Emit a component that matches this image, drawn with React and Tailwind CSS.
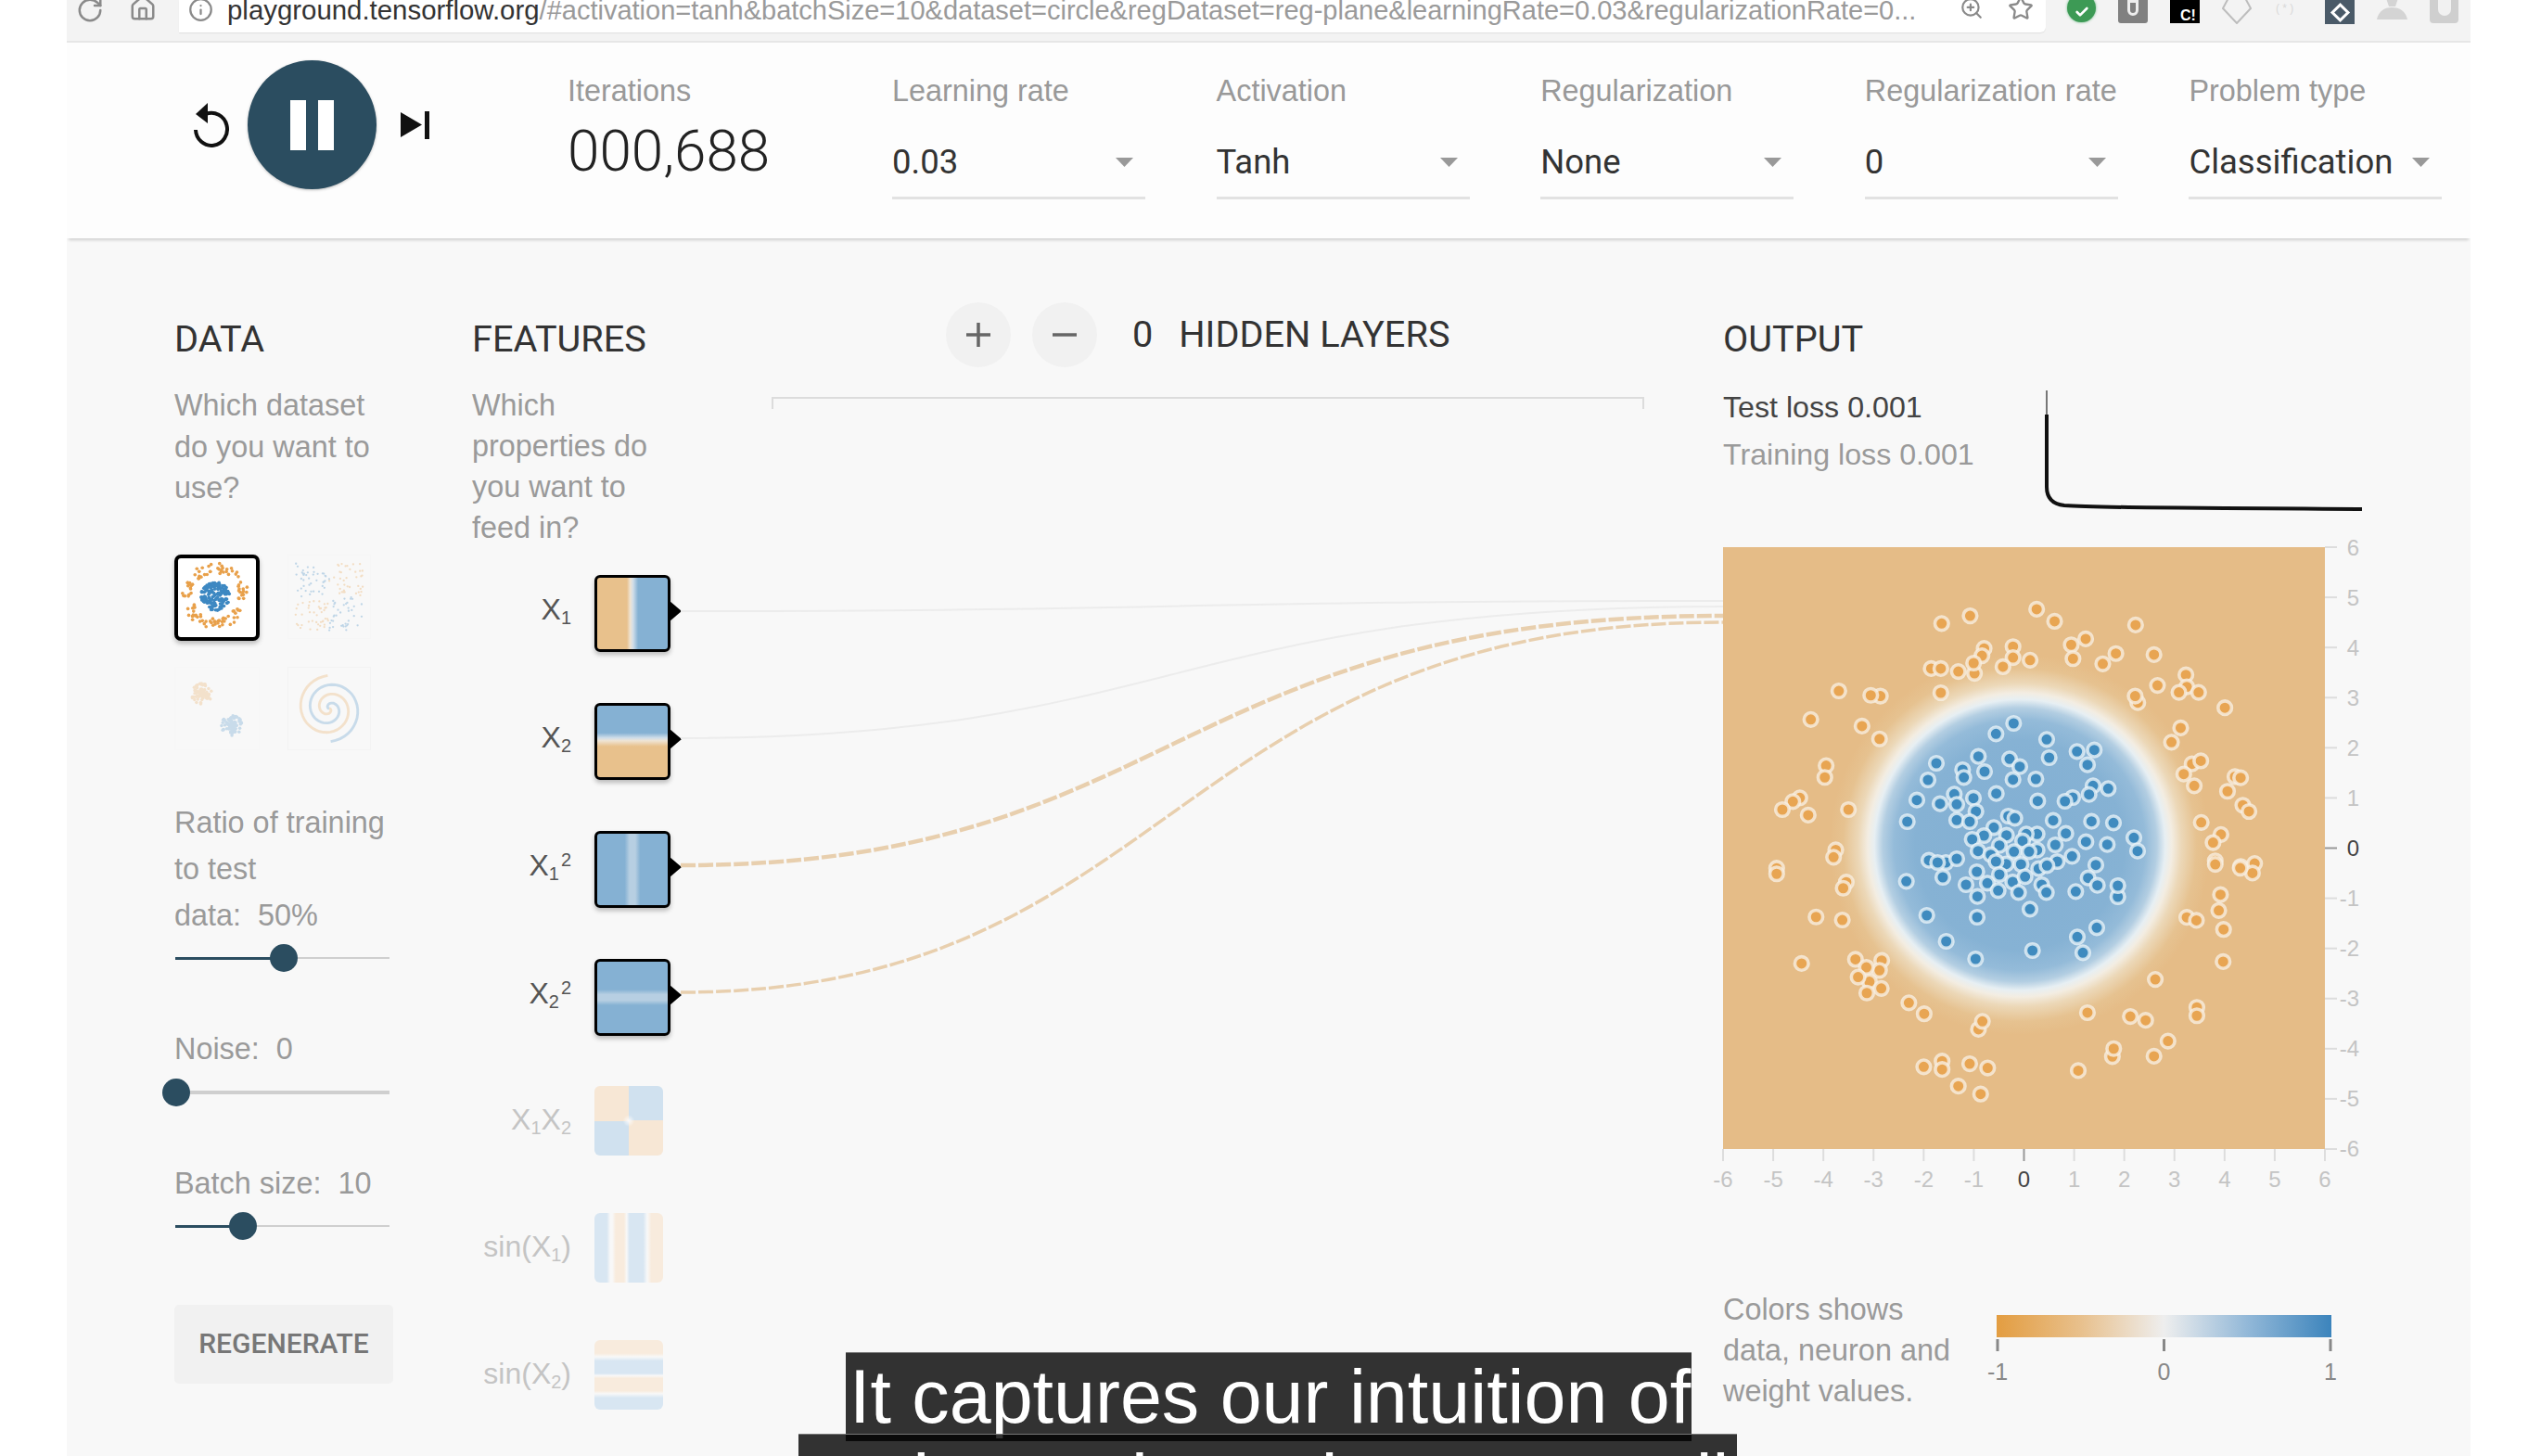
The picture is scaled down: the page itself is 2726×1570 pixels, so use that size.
import { RotateCw, Home, Info, ZoomIn, Star, Check } from 'lucide-react';

const selects = [
  { label: 'Learning rate', value: '0.03' },
  { label: 'Activation', value: 'Tanh' },
  { label: 'Regularization', value: 'None' },
  { label: 'Regularization rate', value: '0' },
  { label: 'Problem type', value: 'Classification' },
];

const features = [
  { key: 'x1', label: <>X<sub className="text-[20px]">1</sub></>, bg: 'bg-[linear-gradient(90deg,#e8c18c_0_42%,#efe4d4_47%,#cfdde9_51%,#85b1d3_58%)]' },
  { key: 'x2', label: <>X<sub className="text-[20px]">2</sub></>, bg: 'bg-[linear-gradient(180deg,#85b1d3_0_38%,#cfdde9_45%,#efe4d4_49%,#e8c18c_57%)]' },
  { key: 'x1s', label: <>X<sub className="text-[20px]">1</sub><sup className="ml-[2px] text-[20px]">2</sup></>, bg: 'bg-[linear-gradient(90deg,#85b1d3_0_39%,#b7cfe2_46%,#b7cfe2_54%,#85b1d3_61%)]' },
  { key: 'x2s', label: <>X<sub className="text-[20px]">2</sub><sup className="ml-[2px] text-[20px]">2</sup></>, bg: 'bg-[linear-gradient(180deg,#85b1d3_0_39%,#b7cfe2_46%,#b7cfe2_54%,#85b1d3_61%)]' },
  { key: 'x1x2', off: true, label: <>X<sub className="text-[20px]">1</sub>X<sub className="text-[20px]">2</sub></>, bg: 'bg-[radial-gradient(circle,#fafafa_0,transparent_12%),conic-gradient(#d0e1ef_0_90deg,#f7e7d5_90deg_180deg,#d0e1ef_180deg_270deg,#f7e7d5_270deg_360deg)]' },
  { key: 'sin1', off: true, label: <>sin(X<sub className="text-[20px]">1</sub>)</>, bg: 'bg-[linear-gradient(90deg,#d8e6f2_0_18%,#f8f8f8_23%,#f8f8f8_26%,#f8ebdd_31%,#f8ebdd_43%,#f8f8f8_47%,#d8e6f2_51%,#d8e6f2_71%,#f8f8f8_77%,#f8ebdd_83%)]' },
  { key: 'sin2', off: true, label: <>sin(X<sub className="text-[20px]">2</sub>)</>, bg: 'bg-[linear-gradient(180deg,#f8ebdd_0_19%,#f8f8f8_24%,#d8e6f2_30%,#d8e6f2_48%,#f8f8f8_51%,#f8ebdd_55%,#f8ebdd_73%,#f8f8f8_77%,#d8e6f2_83%)]' },
];

// dots read off the picture, in crop coordinates
const blueRaw = [[514,120],[457,154],[621,172],[719,211],[775,206],[400,227],[501,235],[629,231],[534,260],[753,254],[264,249],[349,270],[420,276],[237,303],[353,295],[512,302],[586,300],[322,349],[458,347],[384,362],[705,360],[771,322],[758,350],[820,331],[201,368],[276,380],[330,382],[592,371],[680,372],[392,405],[170,438],[330,433],[372,438],[497,420],[518,427],[642,434],[766,437],[837,442],[450,457],[418,483],[590,478],[555,478],[491,482],[543,500],[683,476],[649,513],[748,503],[817,512],[903,490],[915,533],[380,495],[468,515],[399,533],[590,530],[515,535],[564,535],[440,545],[703,550],[655,567],[490,575],[457,567],[538,576],[595,590],[622,580],[780,578],[240,563],[295,570],[268,570],[330,558],[285,618],[395,600],[468,609],[511,633],[551,616],[167,631],[755,620],[785,644],[851,681],[851,645],[360,642],[429,637],[605,642],[620,667],[715,664],[464,661],[530,667],[397,680],[567,721],[233,741],[396,747],[783,781],[720,811],[296,825],[575,855],[391,882],[738,862]];
const orangeTop = [[645,871],[580,892],[797,853],[838,886],[1023,896],[909,934],[876,950],[743,955],[677,960],[672,980],[978,974],[1065,977],[743,985],[782,992],[880,988],[948,1002],[655,1028],[653,1000],[720,1010],[618,1023],[556,1015],[578,1015],[1138,1032],[1073,1061],[1140,1065],[1122,1080],[1167,1080],[345,1076],[440,1090],[418,1088],[578,1081],[1028,1108],[1022,1090],[1227,1122],[281,1154],[398,1172],[438,1207],[1126,1177],[1105,1216],[1152,1275],[1172,1267],[1133,1303],[1157,1335],[1250,1310],[1263,1313],[1233,1350],[316,1280],[313,1312],[256,1368],[240,1378],[216,1400],[275,1415],[367,1400],[1268,1388],[1282,1405],[1173,1435],[1218,1468],[1200,1490],[1205,1540],[1263,1555],[1295,1547],[338,1510],[333,1530],[203,1560]];
const orangeBottom = [[362,52],[355,68],[203,30],[1217,85],[1213,127],[1290,28],[1262,15],[1205,5],[293,144],[353,152],[1140,145],[1162,153],[1224,177],[260,267],[383,256],[443,259],[438,285],[408,277],[415,315],[389,303],[442,333],[409,345],[1223,262],[1068,309],[505,371],[540,400],[913,397],[1011,407],[1046,417],[1163,383],[1163,405],[664,441],[673,420],[1097,472],[970,513],[973,492],[1065,512],[539,540],[581,525],[581,547],[644,532],[685,543],[892,550],[618,591],[669,612]];

const blueDots = blueRaw.map(([x, y]) => [142 + x / 3, 150 + y / 3]);
const orangeDots = [
  ...orangeTop.map(([x, y]) => [-38 + x * 0.472, -270 + y * 0.395]),
  ...orangeBottom.map(([x, y]) => [-38 + x * 0.472, 340 + y * 0.408]),
];

const ticks = [-6, -5, -4, -3, -2, -1, 0, 1, 2, 3, 4, 5, 6];

function rnd(i) {
  const v = Math.sin(i * 12.9898 + 4.1) * 43758.5453;
  return v - Math.floor(v);
}

function Scatter({ points }) {
  return (
    <svg viewBox="0 0 92 92" className="w-full h-full">
      {points.map((p, i) => (
        <circle key={i} cx={p[0]} cy={p[1]} r={p[3] || 2} fill={p[2]} />
      ))}
    </svg>
  );
}

const ORANGE = '#e8a04a';
const BLUE = '#3d88c2';

const circlePts = [];
for (let i = 0; i < 110; i++) {
  const a = rnd(i) * Math.PI * 2;
  const r = 27 + rnd(i + 500) * 12;
  circlePts.push([44 + Math.cos(a) * r, 44 + Math.sin(a) * r, ORANGE]);
}
for (let i = 0; i < 170; i++) {
  const a = rnd(i + 900) * Math.PI * 2;
  const r = Math.sqrt(rnd(i + 1300)) * 17;
  circlePts.push([44 + Math.cos(a) * r, 44 + Math.sin(a) * r, BLUE]);
}

const xorPts = [];
for (let i = 0; i < 160; i++) {
  const x = 8 + rnd(i + 40) * 76;
  const y = 8 + rnd(i + 2040) * 76;
  xorPts.push([x, y, (x < 46) === (y < 46) ? BLUE : ORANGE, 1.2]);
}

const gaussPts = [];
for (let i = 0; i < 90; i++) {
  const a = rnd(i + 70) * Math.PI * 2;
  const r = rnd(i + 3000) * 12;
  gaussPts.push([29 + Math.cos(a) * r, 29 + Math.sin(a) * r, ORANGE, 1.8]);
  gaussPts.push([63 + Math.cos(a + 1) * r, 65 + Math.sin(a + 1) * r, BLUE, 1.8]);
}

function spiral(delta) {
  const out = [];
  for (let t = 0; t < 11; t += 0.15) {
    const r = t * 3.4;
    out.push(`${(46 + r * Math.cos(t + delta)).toFixed(1)},${(46 + r * Math.sin(t + delta)).toFixed(1)}`);
  }
  return out.join(' ');
}

function Slider({ thumb, thick }) {
  return (
    <div className="relative h-[30px] w-[231px] ml-px flex items-center">
      <div className={thick ? 'w-full h-[4px] bg-[#cfcfcf]' : 'w-full h-[2px] bg-[#cfcfcf]'} />
      <div className="absolute left-0 top-[14px] h-[3px] bg-[#2b4d60]" style={{ width: thumb }} />
      <div className="absolute top-0 w-[30px] h-[30px] rounded-full bg-[#2b4d60]" style={{ left: thumb - 15 }} />
    </div>
  );
}

function BrowserBar() {
  return (
    <div className="h-[46px] bg-[#f3f3f3] border-b-2 border-[#e6e6e6] flex items-start overflow-hidden text-[#8a8a8a]">
      <RotateCw className="ml-[10px] -mt-[4px]" size={30} strokeWidth={2} />
      <Home className="ml-[27px] -mt-[6px]" size={30} strokeWidth={2} />
      <div className="ml-[24px] w-[2013px] h-[35px] bg-white rounded-br-md flex items-start shadow-[0_1px_1px_rgba(0,0,0,0.08)]">
        <Info className="ml-[10px] -mt-[3px]" size={27} strokeWidth={2} />
        <span className="ml-[15px] -mt-[6px] h-[34px] leading-[34px] text-[29px] whitespace-nowrap w-[1868px] overflow-hidden text-[#9a9a9a]">
          <span className="text-[#333] text-[29.4px]">playground.tensorflow.org</span>/#activation=tanh&amp;batchSize=10&amp;dataset=circle&amp;regDataset=reg-plane&amp;learningRate=0.03&amp;regularizationRate=0...
        </span>
        <ZoomIn className="-mt-[4px]" size={26} strokeWidth={2} />
        <Star className="ml-[26px] -mt-[5px]" size={28} strokeWidth={2} />
      </div>
      <div className="ml-[23px] w-[31px] h-[31px] -mt-[7px] rounded-full bg-[#3d9a55] flex items-center justify-center text-white shadow-[0_0_3px_#6db985]">
        <Check size={16} strokeWidth={4} className="mt-[8px]" />
      </div>
      <div className="ml-[24px] w-[32px] h-[25px] bg-[#808080] rounded-b-[3px] flex justify-center">
        <div className="w-[12px] h-[17px] rounded-b-full border-[3px] border-[#eee]" />
      </div>
      <div className="ml-[24px] w-[32px] h-[25px] bg-black text-white text-[16px] font-bold leading-[16px] pl-[11px] pt-[9px]">C!</div>
      <svg className="ml-[24px]" width="32" height="26" viewBox="0 0 32 26" fill="none" stroke="#bdbdbd" strokeWidth="2"><path d="M8 -4 L1 9 L16 25 L31 9 L24 -4" /></svg>
      <span className="ml-[26px] w-[27px] text-[12px] leading-[18px] text-[#d8d8d8] whitespace-nowrap">( * )</span>
      <div className="ml-[26px] w-[32px] h-[26px] bg-[#4a5a68] flex items-center justify-center">
        <div className="w-[15px] h-[15px] rotate-45 border-[3px] border-white" />
      </div>
      <svg className="ml-[24px]" width="33" height="21" viewBox="0 0 33 21"><path d="M0 21 C2 12 8 8 16 8 C25 8 31 12 33 21 Z M10 -2 H23 L20 7 H13 Z" fill="#d4d4d4" /></svg>
      <div className="ml-[24px] w-[31px] h-[25px] bg-[#cfcfcf] rounded-b-[4px] flex justify-center">
        <div className="w-[14px] h-[17px] rounded-b-full bg-[#f1f1f1]" />
      </div>
    </div>
  );
}

function Controls() {
  return (
    <header className="relative h-[211px] bg-[#fdfdfd] flex items-start shadow-[0_4px_3px_-2px_rgba(0,0,0,0.16)]">
      <div className="ml-[136px] mt-[19px] h-[139px] flex items-center">
        <svg width="40" height="50" viewBox="0 0 40 50" fill="none">
          <path d="M14 13 A 17 17.5 0 1 1 3 30" stroke="#111" strokeWidth="4" />
          <polygon points="16,1 16,23 3,13" fill="#111" />
        </svg>
        <div className="ml-[19px] w-[139px] h-[139px] rounded-full bg-[#2b4d60] flex items-center justify-center gap-[13px] shadow-[0_1px_3px_rgba(0,0,0,0.25)]">
          <div className="w-[17px] h-[54px] bg-white" />
          <div className="w-[17px] h-[54px] bg-white" />
        </div>
        <svg className="ml-[26px]" width="31" height="30" viewBox="0 0 31 30">
          <polygon points="0,1 0,28 23,14.5" fill="#111" />
          <rect x="26" y="0" width="5" height="30" fill="#111" />
        </svg>
      </div>
      <div className="ml-[149px] w-[350px] mt-[32px]">
        <div className="h-10 leading-10 text-[32.4px] text-[#999]">Iterations</div>
        <div className="mt-[15px] h-[60px] leading-[60px] text-[62px] font-light font-['Roboto',sans-serif] text-[#222]">000,688</div>
      </div>
      <div className="flex gap-[76.6px] mt-[32px]">
        {selects.map((s) => (
          <div key={s.label} className="w-[273px]">
            <div className="h-10 leading-10 text-[32.4px] text-[#999] whitespace-nowrap">{s.label}</div>
            <div className="mt-[37px] h-10 flex items-center justify-between pr-[13px]">
              <span className="text-[36.5px] leading-10 font-['Roboto',sans-serif] text-[#333]">{s.value}</span>
              <svg width="19" height="10" viewBox="0 0 19 10"><polygon points="0,0 19,0 9.5,10" fill="#999" /></svg>
            </div>
            <div className="mt-[17px] h-[3px] bg-[#e2e2e2]" />
          </div>
        ))}
      </div>
    </header>
  );
}

function DataColumn() {
  return (
    <div className="w-[321px] shrink-0 pt-[83px]">
      <h2 className="h-11 leading-[44px] text-[39.7px] font-['Roboto',sans-serif] text-[#333]">DATA</h2>
      <p className="mt-[27px] text-[32.4px] leading-[44.5px] text-[#9a9a9a] whitespace-nowrap">Which dataset<br />do you want to<br />use?</p>
      <div className="mt-[49px] grid grid-cols-[92px_90px] gap-x-[30px] gap-y-[28px]">
        <div className="h-[93px] bg-white border-[4px] border-black rounded-[7px] shadow-[0_3px_5px_rgba(0,0,0,0.25)] overflow-hidden">
          <Scatter points={circlePts} />
        </div>
        <div className="h-[91px] border border-[#f3f3f3] opacity-30"><Scatter points={xorPts} /></div>
        <div className="h-[90px] border border-[#f3f3f3] opacity-25"><Scatter points={gaussPts} /></div>
        <div className="h-[90px] border border-[#f3f3f3]">
          <svg viewBox="0 0 92 92" className="w-full h-full opacity-25" fill="none" strokeWidth="3">
            <polyline points={spiral(0)} stroke={ORANGE} />
            <polyline points={spiral(Math.PI)} stroke={BLUE} />
          </svg>
        </div>
      </div>
      <p className="mt-[53px] text-[32.4px] leading-[50px] text-[#9a9a9a] whitespace-nowrap">Ratio of training<br />to test<br />data:&nbsp; 50%</p>
      <div className="mt-[6px]"><Slider thumb={117} /></div>
      <p className="mt-[58px] text-[32.4px] leading-[50px] text-[#9a9a9a]">Noise:&nbsp; 0</p>
      <div className="mt-[7px]"><Slider thumb={1} thick /></div>
      <p className="mt-[58px] text-[32.4px] leading-[50px] text-[#9a9a9a]">Batch size:&nbsp; 10</p>
      <div className="mt-[6px]"><Slider thumb={73} /></div>
      <button className="mt-[70px] w-[236px] h-[84px] bg-[#f1f1f1] rounded-[5px] text-[30px] font-medium font-['Roboto',sans-serif] text-[#777] shadow-[0_1px_1px_rgba(0,0,0,0.03)]">REGENERATE</button>
    </div>
  );
}

function FeaturesColumn() {
  return (
    <div className="w-[323px] shrink-0 pt-[83px]">
      <h2 className="h-11 leading-[44px] text-[39.7px] font-['Roboto',sans-serif] text-[#333]">FEATURES</h2>
      <p className="mt-[27px] text-[32.4px] leading-[44px] text-[#9a9a9a] whitespace-nowrap">Which<br />properties do<br />you want to<br />feed in?</p>
      <div className="mt-[29px]">
        {features.map((f) => (
          <div key={f.key} className={f.off ? 'flex items-center h-[75px] mb-[63px] -mt-[1px]' : 'flex items-center h-[83px] mb-[55px]'}>
            <div className={f.off ? 'w-[107px] -mt-[4px] text-right text-[32px] leading-10 text-[#c4c4c4]' : 'w-[107px] -mt-[10px] text-right text-[32px] leading-10 text-[#555]'}>{f.label}</div>
            {f.off ? (
              <div className={`ml-[25px] w-[74px] h-[75px] rounded-[6px] ${f.bg}`} />
            ) : (
              <div className="relative ml-[25px] w-[82px] h-[83px]">
                <div className={`w-full h-full rounded-[6px] border-[3.5px] border-black shadow-[0_3px_5px_rgba(0,0,0,0.25)] ${f.bg}`} />
                <svg className="absolute -right-[12px] top-[28px]" width="13" height="22" viewBox="0 0 13 22"><polygon points="0,0 13,11 0,22" fill="#000" /></svg>
              </div>
            )}
          </div>
        ))}
      </div>
    </div>
  );
}

function HiddenLayers() {
  return (
    <div className="w-[941px] shrink-0 pt-[65px]">
      <div className="flex items-center pl-[188px]">
        <div className="w-[70px] h-[70px] rounded-full bg-[#f1f1f1] flex items-center justify-center">
          <svg width="30" height="30" viewBox="0 0 30 30"><path d="M15 2 V28 M2 15 H28" stroke="#666" strokeWidth="3.5" /></svg>
        </div>
        <div className="ml-[23px] w-[70px] h-[70px] rounded-full bg-[#f1f1f1] flex items-center justify-center">
          <svg width="30" height="30" viewBox="0 0 30 30"><path d="M2 15 H28" stroke="#666" strokeWidth="3.5" /></svg>
        </div>
        <span className="ml-[38px] text-[39.7px] leading-[44px] font-['Roboto',sans-serif] text-[#333]">0</span>
        <span className="ml-[28px] text-[39.7px] leading-[44px] font-['Roboto',sans-serif] text-[#333] whitespace-nowrap">HIDDEN LAYERS</span>
      </div>
      <div className="mt-[32px] h-[13px] border-t-2 border-x-2 border-[#dcdcdc]" />
    </div>
  );
}

function OutputColumn() {
  return (
    <div className="w-[720px] shrink-0 ml-[85px] pt-[83px]">
      <h2 className="h-11 leading-[44px] text-[39.7px] font-['Roboto',sans-serif] text-[#333]">OUTPUT</h2>
      <div className="mt-[26px] h-[176px] flex items-start">
        <div className="w-[346px] text-[32.2px] leading-[51px] whitespace-nowrap">
          <div className="text-[#444]">Test loss 0.001</div>
          <div className="text-[#9a9a9a]">Training loss 0.001</div>
        </div>
        <svg className="mt-[7px]" width="343" height="130" viewBox="0 0 343 130" fill="none">
          <path d="M3 0 V28" stroke="#777" strokeWidth="2" />
          <path d="M3 26 V104 Q3 122 22 124 C 60 127 120 126 343 128" stroke="#111" strokeWidth="4" />
        </svg>
      </div>
      <svg width="649" height="649" viewBox="0 0 649 649" className="block overflow-visible">
        <defs>
          <radialGradient id="boundary" gradientUnits="userSpaceOnUse" cx="320" cy="321" r="205">
            <stop offset="0" stopColor="#82afd3" />
            <stop offset="0.55" stopColor="#86b2d4" />
            <stop offset="0.66" stopColor="#94bbd9" />
            <stop offset="0.72" stopColor="#b3cee2" />
            <stop offset="0.765" stopColor="#e7eff3" />
            <stop offset="0.8" stopColor="#f3ede2" />
            <stop offset="0.85" stopColor="#ecd8b8" />
            <stop offset="0.93" stopColor="#e6c290" />
            <stop offset="1" stopColor="#e5bc87" />
          </radialGradient>
        </defs>
        <rect width="649" height="649" fill="url(#boundary)" />
        {orangeDots.map(([x, y], i) => (
          <circle key={i} cx={x} cy={y} r="7.3" fill="#e8a552" stroke="#f8efe2" strokeWidth="3.6" strokeOpacity="0.8" />
        ))}
        {blueDots.map(([x, y], i) => (
          <circle key={i} cx={x} cy={y} r="7.3" fill="#3f8bbf" stroke="#e9f2f8" strokeWidth="3.6" strokeOpacity="0.8" />
        ))}
        {ticks.map((t) => {
          const pos = 324.5 + t * 54.08;
          const zero = t === 0;
          return (
            <g key={t} fontFamily="'Liberation Sans', sans-serif" fontSize="24" fill={zero ? '#444' : '#c4c4c4'}>
              <line x1={pos} x2={pos} y1="649" y2="662" stroke={zero ? '#999' : '#ddd'} strokeWidth="2" />
              <text x={pos} y="690" textAnchor="middle">{t}</text>
              <line y1={324.5 - t * 54.08} y2={324.5 - t * 54.08} x1="649" x2="662" stroke={zero ? '#999' : '#ddd'} strokeWidth="2" />
              <text x="686" y={333 - t * 54.08} textAnchor="end">{t}</text>
            </g>
          );
        })}
      </svg>
      <div className="mt-[151px] flex items-start">
        <p className="w-[295px] text-[32.4px] leading-[44px] text-[#9a9a9a] whitespace-nowrap">Colors shows<br />data, neuron and<br />weight values.</p>
        <svg width="361" height="80" viewBox="0 0 361 80" className="mt-[28px] overflow-visible">
          <defs>
            <linearGradient id="legend">
              <stop offset="0" stopColor="#e39d41" />
              <stop offset="0.25" stopColor="#e8c08c" />
              <stop offset="0.5" stopColor="#eeeeee" />
              <stop offset="0.75" stopColor="#92b8d8" />
              <stop offset="1" stopColor="#3c84bc" />
            </linearGradient>
          </defs>
          <rect width="361" height="24" fill="url(#legend)" />
          {[[1, '-1'], [180.5, '0'], [360, '1']].map(([x, l]) => (
            <g key={l}>
              <line x1={x} x2={x} y1="26" y2="39" stroke="#888" strokeWidth="3" />
              <text x={x} y="70" textAnchor="middle" fontFamily="'Liberation Sans', sans-serif" fontSize="25" fill="#888">{l}</text>
            </g>
          ))}
        </svg>
      </div>
    </div>
  );
}

export default function App() {
  return (
    <div className="relative w-[2726px] h-[1570px] overflow-hidden bg-white font-['Liberation_Sans',Arial,sans-serif]">
      <div className="ml-[72px] w-[2592px] h-full bg-[#f8f8f8] overflow-hidden">
        <BrowserBar />
        <Controls />
        <main className="mt-[4px] flex items-start pl-[116px]">
          <DataColumn />
          <FeaturesColumn />
          <HiddenLayers />
          <OutputColumn />
        </main>
      </div>

      {/* links from the inputs to the output square */}
      <svg className="absolute left-[734px] top-[640px]" width="1124" height="440" viewBox="734 640 1124 440" fill="none">
        <path d="M734 659 C1265 659 1265 648 1858 648" stroke="#ececec" strokeWidth="2" />
        <path d="M734 796 C1265 796 1265 654 1858 654" stroke="#ececec" strokeWidth="2" />
        <path d="M734 933 C1265 933 1265 664 1858 664" stroke="#e8cfae" strokeWidth="4.5" strokeDasharray="16 3" />
        <path d="M734 1070 C1265 1070 1265 671 1858 671" stroke="#e8cfae" strokeWidth="3.5" strokeDasharray="16 3" />
      </svg>

      {/* captions over the video */}
      <div className="absolute left-[912px] top-[1458px] w-[912px] h-[96px] bg-black/80 border-t border-[#777] pl-[4px] text-white text-[80.8px] leading-[95px] whitespace-nowrap overflow-hidden">It captures our intuition of</div>
      <div className="absolute left-[861px] top-[1546px] w-[1012px] h-[96px] bg-black/80 border-t border-[#777] pl-[8px] pt-[2px] text-white text-[80px] leading-[95px] whitespace-nowrap [word-spacing:22px]">a dense boundary as well</div>
    </div>
  );
}
